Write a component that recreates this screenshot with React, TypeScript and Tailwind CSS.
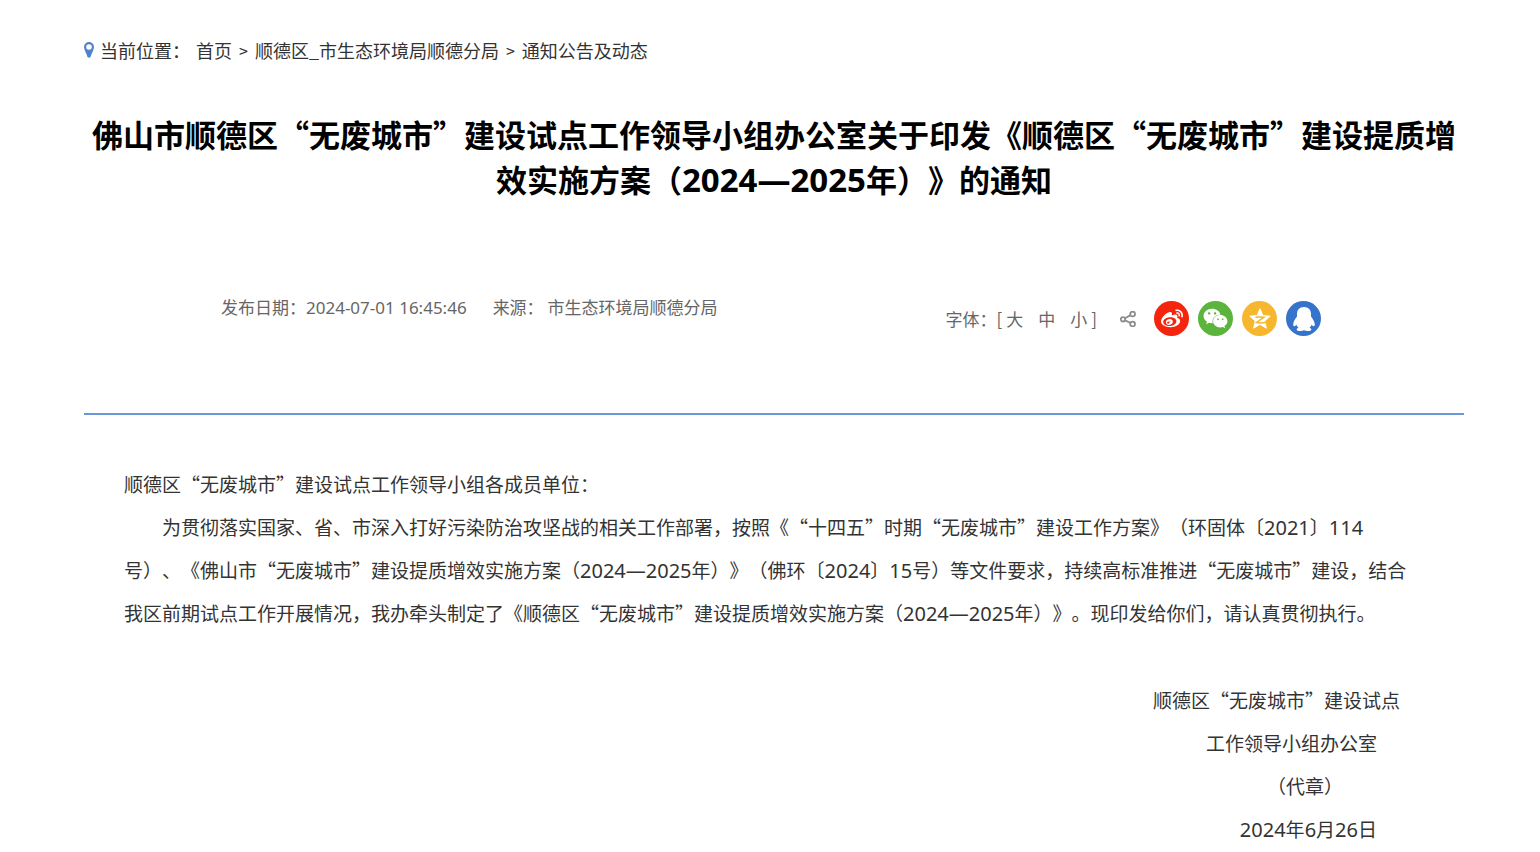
import React from 'react';
import { FaWeibo, FaWeixin } from 'react-icons/fa';

const BREADCRUMBS = ['首页', '顺德区_市生态环境局顺德分局', '通知公告及动态'];
const FONT_SIZES = ['大', '中', '小'];

interface NumProps {
  children: React.ReactNode;
  className?: string;
}

// Latin digits use a wider face than the ones in the CJK font
const Num: React.FC<NumProps> = ({ children, className = 'text-[20px]' }) => (
  <span className={`font-['Noto_Sans',sans-serif] leading-none ${className}`}>
    {children}
  </span>
);

const PinIcon = () => (
  <svg viewBox="0 0 10 16" className="w-[10px] h-4 shrink-0" aria-hidden="true">
    <path
      fillRule="evenodd"
      fill="#4f83cc"
      d="M5 0a5 5 0 0 1 5 5c0 3-2.500 6-3.500 10q-1.500 1.500-3 0C2.500 11 0 8 0 5a5 5 0 0 1 5-5Zm0 2.200a2.800 2.800 0 1 0 0 5.600a2.800 2.800 0 0 0 0-5.600Z"
    />
  </svg>
);

const ShareIcon = () => (
  <svg
    viewBox="0 0 16 16"
    className="size-4"
    fill="none"
    stroke="#8c8c8c"
    strokeWidth="1.800"
    aria-hidden="true"
  >
    <circle cx="3" cy="8.300" r="2.200" />
    <circle cx="12.600" cy="3" r="2.400" />
    <circle cx="12.600" cy="13" r="2.400" />
    <path d="M5 7.200l5.600-3.100M5 9.400l5.600 2.600" />
  </svg>
);

const QzoneIcon = () => (
  <svg viewBox="0 0 24 24" className="size-6" aria-hidden="true">
    <path
      fill="#fff"
      stroke="#fff"
      strokeLinejoin="round"
      d="M12 1.800l2.900 6.800 7.300.600-5.500 4.800 1.700 7.200L12 17.400l-6.400 3.800 1.700-7.200-5.500-4.800 7.300-.600Z"
    />
    <path
      fill="none"
      stroke="#f6b72f"
      strokeWidth="1.500"
      d="M7.500 10.200q4.500-.600 8.500 0l-7.500 5.300q4.500.900 9.500-.300"
    />
  </svg>
);

const QqIcon = () => (
  <svg viewBox="0 0 24 26" className="w-6 h-[26px]" fill="#fff" aria-hidden="true">
    <path d="M12 1C7.400 1 5 4 5 8v2.500C3 13 1.200 16 1.200 18.500c0 2 1.600 2.300 3.300.200.400 1.200 1.100 2.200 2 3.100-1.600.600-2 1.300-1.700 2.200.500 1.300 5.200 1.200 7.200.200 2 1 6.700 1.100 7.200-.200.300-.900-.100-1.600-1.700-2.200.9-.9 1.600-1.900 2-3.100 1.700 2.100 3.300 1.800 3.300-.200 0-2.500-1.800-5.500-3.800-8V8c0-4-2.400-7-7-7Z" />
  </svg>
);

const SHARE_TARGETS = [
  { name: '微博', color: 'bg-[#f5240c]', icon: <FaWeibo size={22} color="#fff" /> },
  { name: '微信', color: 'bg-[#5bb53c]', icon: <FaWeixin size={25} color="#fff" /> },
  { name: 'QQ空间', color: 'bg-[#f6b72f]', icon: <QzoneIcon /> },
  { name: 'QQ', color: 'bg-[#3673cb]', icon: <QqIcon /> },
];

const App: React.FC = () => {
  return (
    <main
      lang="zh-CN"
      className="pl-[84px] pr-[76px] pt-[34px] bg-white text-[#333] font-['Noto_Sans_CJK_SC',sans-serif] [text-spacing-trim:space-all]"
    >
      {/* Breadcrumb */}
      <nav className="flex items-center text-lg leading-8">
        <PinIcon />
        <span className="mx-[6px]">当前位置：</span>
        {BREADCRUMBS.map((crumb, idx) => (
          <React.Fragment key={crumb}>
            {idx > 0 && <span className="mx-[7px] text-base">&gt;</span>}
            <a href="#">{crumb}</a>
          </React.Fragment>
        ))}
      </nav>

      <h1 className="mt-[45px] text-center text-[31px] leading-[45px] font-bold text-black">
        佛山市顺德区“无废城市”建设试点工作领导小组办公室关于印发《顺德区“无废城市”建设提质增效实施方案（<Num className="text-[33px]">2024—2025</Num>年）》的通知
      </h1>

      {/* Publish info and sharing */}
      <div className="mt-[90px] flex items-start justify-between pl-[137px] pr-[143px] text-[17px] leading-8 text-[#666]">
        <div className="flex gap-[26px]">
          <span>
            发布日期：<Num className="text-[17px]">2024-07-01 16:45:46</Num>
          </span>
          <span>来源： 市生态环境局顺德分局</span>
        </div>
        <div className="flex items-center pt-[10px]">
          <span>字体：[</span>
          <div className="flex gap-[15px] mx-1">
            {FONT_SIZES.map((size) => (
              <button key={size} type="button">
                {size}
              </button>
            ))}
          </div>
          <span>]</span>
          <span className="ml-[23px] mr-[18px]">
            <ShareIcon />
          </span>
          <div className="flex gap-[9px]">
            {SHARE_TARGETS.map((target) => (
              <button
                key={target.name}
                type="button"
                aria-label={target.name}
                className={`size-[35px] rounded-full flex items-center justify-center ${target.color}`}
              >
                {target.icon}
              </button>
            ))}
          </div>
        </div>
      </div>

      <hr className="mt-[77px] border-0 h-[2px] bg-[#6c96da]" />

      {/* Notice body */}
      <article className="mt-[47px] pl-10 pr-12 text-[19px] leading-[43px]">
        <p>顺德区“无废城市”建设试点工作领导小组各成员单位：</p>
        <p className="indent-[2em]">
          为贯彻落实国家、省、市深入打好污染防治攻坚战的相关工作部署，按照《“十四五”时期“无废城市”建设工作方案》（环固体〔<Num>2021</Num>〕<Num>114</Num>号）、《佛山市“无废城市”建设提质增效实施方案（<Num>2024—2025</Num>年）》（佛环〔<Num>2024</Num>〕<Num>15</Num>号）等文件要求，持续高标准推进“无废城市”建设，结合我区前期试点工作开展情况，我办牵头制定了《顺德区“无废城市”建设提质增效实施方案（<Num>2024—2025</Num>年）》。现印发给你们，请认真贯彻执行。
        </p>
      </article>

      <footer className="mt-11 text-right text-[19px] leading-[43px]">
        <p className="pr-16">顺德区“无废城市”建设试点</p>
        <p className="pr-[87px]">工作领导小组办公室</p>
        <p className="pr-[121px]">（代章）</p>
        <p className="pr-[87px]">
          <Num>2024</Num>年<Num>6</Num>月<Num>26</Num>日
        </p>
      </footer>
    </main>
  );
};

export default App;
